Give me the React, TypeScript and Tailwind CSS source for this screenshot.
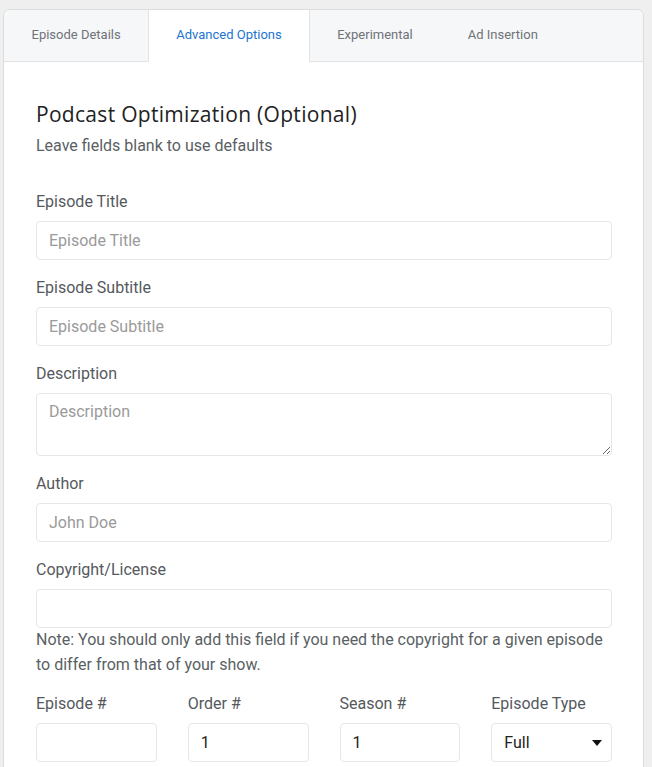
import React from "react";

const tabs = ["Episode Details", "Advanced Options", "Experimental", "Ad Insertion"];

function Label({ children }: { children: React.ReactNode }) {
  return <div className="text-[16px] leading-[20px] text-[#55595e] mb-[9px]">{children}</div>;
}

const inputCls =
  "block w-full h-[39px] rounded-[4px] border border-[#e6e6e6] bg-white px-[12px] text-[16px] text-[#222] placeholder:text-[#9a9a9a] outline-none";

export default function App() {
  return (
    <div
      className="min-h-[767px] bg-[#efefef] pl-[3px] pr-[8px] pt-[9px]"
      style={{ fontFamily: "Roboto, 'Liberation Sans', sans-serif" }}
    >
      <div className="rounded-t-[7px] border-[1.5px] border-[#dcdcdc] bg-white overflow-hidden">
        <div className="flex h-[52px] bg-[#f6f7f9] border-b border-[#e3e3e3]">
          {tabs.map((t, i) => {
            const active = i === 1;
            return (
              <div
                key={t}
                className={
                  active
                    ? "flex items-center pb-[2px] px-[27px] bg-white text-[13px] text-[#1d74d2] border-l border-r border-[#e3e3e3] -mb-px"
                    : "flex items-center pb-[1px] px-[27.5px] text-[13px] text-[#6f7378]"
                }
              >
                {t}
              </div>
            );
          })}
        </div>
        <div className="pl-[32px] pr-[31px] pt-[38px] pb-[40px]">
          <h2
            className="text-[21px] leading-[28px] text-[#222] tracking-[0.3px]"
            style={{ fontFamily: "'Open Sans', 'Noto Sans', sans-serif" }}
          >
            Podcast Optimization (Optional)
          </h2>
          <p className="mt-[8px] text-[16px] leading-[20px] text-[#5a5f64]">Leave fields blank to use defaults</p>

          <div className="mt-[36px]">
            <Label>Episode Title</Label>
            <input className={inputCls} placeholder="Episode Title" />
          </div>
          <div className="mt-[18px]">
            <Label>Episode Subtitle</Label>
            <input className={inputCls} placeholder="Episode Subtitle" />
          </div>
          <div className="mt-[18px]">
            <Label>Description</Label>
            <textarea
              className="block w-full h-[63px] rounded-[4px] border border-[#e6e6e6] bg-white px-[12px] py-[8px] text-[16px] leading-[20px] text-[#222] placeholder:text-[#9a9a9a] outline-none"
              placeholder="Description"
            />
          </div>
          <div className="mt-[18px]">
            <Label>Author</Label>
            <input className={inputCls} placeholder="John Doe" />
          </div>
          <div className="mt-[18px]">
            <Label>Copyright/License</Label>
            <input className={inputCls} />
            <p className="mt-[-1px] text-[16px] leading-[25px] text-[#5a5f64]">
              Note: You should only add this field if you need the copyright for a given episode to differ from that of
              your show.
            </p>
          </div>
          <div className="mt-[17px] grid grid-cols-4 gap-x-[31px]">
            <div>
              <Label>Episode #</Label>
              <input className={inputCls} />
            </div>
            <div>
              <Label>Order #</Label>
              <input className={inputCls} defaultValue="1" />
            </div>
            <div>
              <Label>Season #</Label>
              <input className={inputCls} defaultValue="1" />
            </div>
            <div>
              <Label>Episode Type</Label>
              <div className="relative flex h-[39px] items-center rounded-[4px] border border-[#e6e6e6] bg-white px-[12px] text-[16px] text-[#222]">
                Full
                <svg className="absolute right-[9px] top-[16px]" width="10" height="6" viewBox="0 0 10 6">
                  <path d="M0 0 L10 0 L5 6 Z" fill="#111" />
                </svg>
              </div>
            </div>
          </div>
        </div>
      </div>
    </div>
  );
}
